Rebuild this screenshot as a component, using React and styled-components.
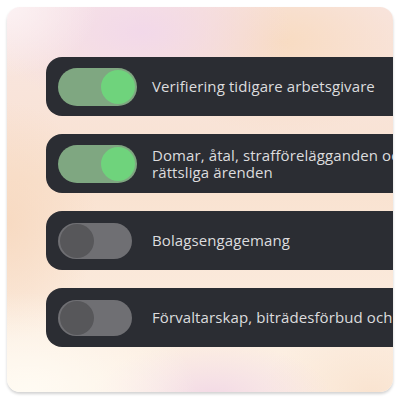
import React from 'react'
import styled, { createGlobalStyle } from 'styled-components'

const GlobalStyle = createGlobalStyle`
  html, body {
    margin: 0;
    padding: 0;
    background: #ffffff;
  }
  body {
    font-family: 'Open Sans', 'Noto Sans', sans-serif;
  }
`

const items = [
  { label: 'Verifiering tidigare arbetsgivare', on: true },
  { label: 'Domar, åtal, strafförelägganden och andra rättsliga ärenden', on: true },
  { label: 'Bolagsengagemang', on: false },
  { label: 'Förvaltarskap, biträdesförbud och näringsförbud', on: false },
]

const App = () => {
  return (
    <>
      <GlobalStyle />
      <Page>
        <Card>
          <List>
            {items.map((item) => (
              <Row key={item.label}>
                <Toggle on={item.on ? 1 : 0}>
                  <Knob on={item.on ? 1 : 0} />
                </Toggle>
                <Label>{item.label}</Label>
              </Row>
            ))}
          </List>
        </Card>
      </Page>
    </>
  )
}

export default App

const Page = styled.div`
  width: 400px;
  height: 400px;
  padding: 7px;
  box-sizing: border-box;
`

const Card = styled.div`
  width: 386px;
  height: 385px;
  border-radius: 13px;
  overflow: hidden;
  box-shadow: 0 2px 3px rgba(0, 0, 0, 0.18);
  background:
    radial-gradient(ellipse 90px 70px at 0px 0px, rgba(252, 242, 244, 0.95), transparent),
    radial-gradient(ellipse 150px 80px at 135px 25px, rgba(242, 216, 234, 0.95), transparent),
    radial-gradient(ellipse 160px 90px at 275px 35px, rgba(248, 219, 192, 0.95), transparent),
    radial-gradient(ellipse 170px 100px at 20px 385px, rgba(255, 251, 243, 1), transparent),
    radial-gradient(ellipse 120px 55px at 205px 390px, rgba(242, 216, 230, 0.95), transparent),
    radial-gradient(ellipse 110px 70px at 365px 385px, rgba(249, 226, 206, 0.9), transparent),
    radial-gradient(ellipse 90px 120px at 0px 215px, rgba(247, 217, 192, 0.9), transparent),
    linear-gradient(180deg, #f8e6e4 0%, #f9e2d0 45%, #fbeadc 75%, #fdf2e6 100%);
  box-sizing: border-box;
  padding: 50px 0 0 39px;
`

const List = styled.div`
  display: flex;
  flex-direction: column;
  gap: 18px;
`

const Row = styled.div`
  width: 480px;
  height: 59px;
  background: #2b2d33;
  border-radius: 16px;
  display: flex;
  align-items: center;
  padding: 0 12px;
  gap: 15px;
  box-sizing: border-box;
`

const Toggle = styled.div`
  flex: 0 0 auto;
  width: ${(p) => (p.on ? 79 : 74)}px;
  height: ${(p) => (p.on ? 38 : 36)}px;
  border-radius: 20px;
  background: ${(p) => (p.on ? '#7fa781' : '#6f6f73')};
  display: flex;
  align-items: center;
  justify-content: ${(p) => (p.on ? 'flex-end' : 'flex-start')};
  padding: 0 2px;
  box-sizing: border-box;
  margin-right: ${(p) => (p.on ? 0 : 5)}px;
`

const Knob = styled.div`
  width: 34px;
  height: 34px;
  border-radius: 50%;
  background: ${(p) => (p.on ? '#6fd37c' : '#57575a')};
`

const Label = styled.div`
  color: #dcdcde;
  font-size: 15px;
  line-height: 17px;
  letter-spacing: 0.1px;
  width: 355px;
`
